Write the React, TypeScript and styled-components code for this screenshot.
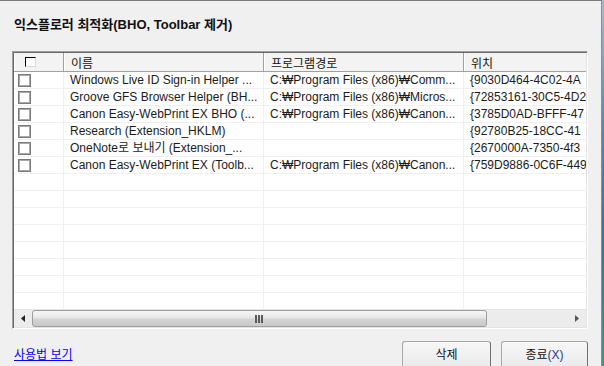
import React from 'react';
import styled, { createGlobalStyle } from 'styled-components';

const GlobalStyle = createGlobalStyle`
  html, body {
    margin: 0;
    padding: 0;
    width: 604px;
    height: 366px;
    overflow: hidden;
    background: linear-gradient(180deg, #a9bccd 0%, #5a86ad 35%, #3f7295 65%, #4e8f86 100%);
  }
  body {
    font-family: "Liberation Sans", "Noto Sans CJK KR", sans-serif;
    font-size: 12px;
  }
`;

const Frame = styled.div`
  display: flex;
  flex-direction: column;
  box-sizing: border-box;
  width: 602px;
  height: 366px;
  border-top: 1px solid #7c7c7c;
  border-right: 1px solid #8c8c8c;
  background: #f0f0f0;
  padding: 0 13px 0 12px;
  overflow: hidden;

  & > * {
    flex-shrink: 0;
  }
`;

const Title = styled.h1`
  margin: 0;
  height: 50px;
  box-sizing: border-box;
  padding: 16px 0 0 2px;
  font-size: 13px;
  line-height: 16px;
  font-weight: bold;
  color: #111;
`;

const ListBox = styled.div`
  display: flex;
  flex-direction: column;
  box-sizing: border-box;
  height: 278px;
  border: 1px solid;
  border-color: #a0a0a0 #ffffff #ffffff #a0a0a0;
  box-shadow: inset 1px 1px 0 #696969, inset -1px -1px 0 #e3e3e3;
  padding: 1px;
  background: #fff;
  overflow: hidden;
`;

const Grid = styled.div`
  flex: 1;
  min-height: 0;
  overflow: hidden;
  display: flex;
  flex-direction: column;
`;

const HeaderRow = styled.div`
  display: grid;
  grid-template-columns: 50px 200px 200px 200px;
  height: 18px;
  background: #f3f3f3;
  border-bottom: 1px solid #a0a0a0;
  flex-shrink: 0;
`;

const HeaderCell = styled.div<{ $pad?: number }>`
  display: flex;
  align-items: center;
  padding-left: ${(p) => p.$pad ?? 6}px;
  border-left: 1px solid #fff;
  border-right: 1px solid #a0a0a0;
  color: #111;
  white-space: nowrap;
  overflow: hidden;
`;

const HeaderBox = styled.span`
  display: inline-block;
  box-sizing: border-box;
  width: 11px;
  height: 10px;
  border-top: 1px solid #000;
  border-left: 1px solid #000;
  border-right: 1px solid #d8d8d8;
  border-bottom: 1px solid #d8d8d8;
  background: #fff;
`;

const Row = styled.div`
  display: grid;
  grid-template-columns: 50px 200px 200px 200px;
  height: 17px;
  box-sizing: border-box;
  border-bottom: 1px solid #f0f0f0;
  flex-shrink: 0;
`;

const Cell = styled.div`
  display: flex;
  align-items: center;
  padding-left: 6px;
  border-right: 1px solid #f0f0f0;
  color: #1b1b1b;
  white-space: nowrap;
  overflow: hidden;
  line-height: 16px;
`;

const CheckCell = styled(Cell)`
  padding-left: 4px;
`;

const RowBox = styled.span`
  display: inline-block;
  box-sizing: border-box;
  width: 13px;
  height: 13px;
  border: 1px solid #7a7a7a;
  box-shadow: inset 0 0 0 1px #a9a9a9;
  background: #fff;
`;

const HScroll = styled.div`
  display: flex;
  align-items: stretch;
  height: 17px;
  flex-shrink: 0;
  background: #ececec;
  border-top: 1px solid #e6e6e6;
`;

const Arrow = styled.div`
  width: 18px;
  display: flex;
  align-items: center;
  justify-content: center;
  flex-shrink: 0;
`;

const Thumb = styled.div`
  width: 455px;
  box-sizing: border-box;
  border: 1px solid #9d9d9d;
  border-radius: 3px;
  background: linear-gradient(180deg, #f7f7f7 0%, #e6e6e6 45%, #d4d4d4 55%, #c9c9c9 100%);
  display: flex;
  align-items: center;
  justify-content: center;
  flex-shrink: 0;
`;

const Track = styled.div`
  flex: 1;
  background: #ececec;
`;

const Footer = styled.div`
  display: flex;
  align-items: flex-start;
  justify-content: space-between;
  padding-top: 12px;
`;

const HelpLink = styled.a`
  margin: 6px 0 0 2px;
  color: #0000ff;
  text-decoration: underline;
  cursor: pointer;
  line-height: 16px;
`;

const Buttons = styled.div`
  display: flex;
  gap: 10px;
`;

const Button = styled.button<{ $w: number }>`
  width: ${(p) => p.$w}px;
  height: 30px;
  padding: 0 0 6px;
  border: 1px solid #a8a8a8;
  border-right-color: #707070;
  border-radius: 3px 3px 0 0;
  background: linear-gradient(180deg, #f7f7f7 0%, #f0f0f0 50%, #e8e8e8 100%);
  font-family: "Liberation Sans", "Noto Sans CJK KR", sans-serif;
  font-size: 12px;
  color: #111;
`;

const Mnemonic = styled.span`
  color: #1c3c90;
`;

const rows = [
  ['Windows Live ID Sign-in Helper ...', 'C:₩Program Files (x86)₩Comm...', '{9030D464-4C02-4A'],
  ['Groove GFS Browser Helper (BH...', 'C:₩Program Files (x86)₩Micros...', '{72853161-30C5-4D2'],
  ['Canon Easy-WebPrint EX BHO (...', 'C:₩Program Files (x86)₩Canon...', '{3785D0AD-BFFF-47'],
  ['Research (Extension_HKLM)', '', '{92780B25-18CC-41'],
  ['OneNote로 보내기 (Extension_...', '', '{2670000A-7350-4f3'],
  ['Canon Easy-WebPrint EX (Toolb...', 'C:₩Program Files (x86)₩Canon...', '{759D9886-0C6F-449'],
];

const EMPTY_ROWS = 9;

export default function App() {
  return (
    <>
      <GlobalStyle />
      <Frame>
        <Title>익스플로러 최적화(BHO, Toolbar 제거)</Title>
        <ListBox>
          <Grid>
            <HeaderRow>
              <HeaderCell $pad={10}>
                <HeaderBox />
              </HeaderCell>
              <HeaderCell>이름</HeaderCell>
              <HeaderCell>프로그램경로</HeaderCell>
              <HeaderCell>위치</HeaderCell>
            </HeaderRow>
            {rows.map((r, i) => (
              <Row key={i}>
                <CheckCell>
                  <RowBox />
                </CheckCell>
                <Cell>{r[0]}</Cell>
                <Cell>{r[1]}</Cell>
                <Cell>{r[2]}</Cell>
              </Row>
            ))}
            {Array.from({ length: EMPTY_ROWS }).map((_, i) => (
              <Row key={'e' + i}>
                <Cell />
                <Cell />
                <Cell />
                <Cell />
              </Row>
            ))}
          </Grid>
          <HScroll>
            <Arrow>
              <svg width="4" height="7" viewBox="0 0 4 7">
                <path d="M4 0 L0 3.5 L4 7 Z" fill="#222" />
              </svg>
            </Arrow>
            <Thumb>
              <svg width="9" height="8" viewBox="0 0 9 8">
                <rect x="0" y="0" width="2" height="8" fill="#5a5a5a" />
                <rect x="3" y="0" width="2" height="8" fill="#5a5a5a" />
                <rect x="6" y="0" width="2" height="8" fill="#5a5a5a" />
              </svg>
            </Thumb>
            <Track />
            <Arrow>
              <svg width="4" height="7" viewBox="0 0 4 7">
                <path d="M0 0 L4 3.5 L0 7 Z" fill="#555" />
              </svg>
            </Arrow>
          </HScroll>
        </ListBox>
        <Footer>
          <HelpLink>사용법 보기</HelpLink>
          <Buttons>
            <Button $w={89}>삭제</Button>
            <Button $w={87}>
              종료<Mnemonic>(X)</Mnemonic>
            </Button>
          </Buttons>
        </Footer>
      </Frame>
    </>
  );
}
